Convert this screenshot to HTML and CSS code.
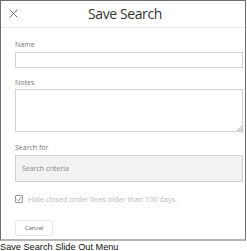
FILE: index.html
```html
<!DOCTYPE html>
<html>
<head>
<meta charset="utf-8">
<link rel="stylesheet" href="styles.css">
</head>
<body>
<div class="panel">
  <div class="header">
    <svg class="close" width="9" height="9" viewBox="0 0 9 9"><path d="M0.5 0.5L8.5 8.5M8.5 0.5L0.5 8.5" stroke="#666" stroke-width="0.9" fill="none"/></svg>
    <div class="title">Save Search</div>
  </div>
  <div class="body">
    <div class="label l-name">Name</div>
    <div class="input"></div>
    <div class="label l-notes">Notes</div>
    <div class="textarea">
      <svg class="grip" width="5" height="5" viewBox="0 0 5 5"><path d="M5 0L0 5M5 2L2 5M5 4L4 5" stroke="#aaa" stroke-width="0.8"/></svg>
    </div>
    <div class="label l-search">Search for</div>
    <div class="criteria">Search criteria</div>
    <div class="check-row">
      <span class="checkbox"><svg width="8" height="8" viewBox="0 0 8 8"><path d="M1.8 4.2L3.4 5.8L6.4 2" stroke="#888" stroke-width="0.9" fill="none"/></svg></span>
      <span class="check-text">Hide closed order lines older than 100 days.</span>
    </div>
    <div class="btn">Cancel</div>
  </div>
</div>
<div class="caption">Save Search Slide Out Menu</div>
</body>
</html>
```
FILE: styles.css
```css
html, body { margin: 0; padding: 0; background: #fff; }
body { font-family: "Open Sans", sans-serif; }
.panel {
  width: 246px;
  height: 241px;
  box-sizing: border-box;
  border: 1px solid #6e6e6e;
  border-bottom: 2px solid #b5b5b5;
  background: #fff;
  position: relative;
}
.header {
  height: 26px;
  border-bottom: 1px solid #ebebeb;
  display: flex;
  align-items: center;
  justify-content: center;
  position: relative;
}
.close { position: absolute; left: 8px; top: 8px; }
.title { font-size: 14px; letter-spacing: -0.4px; color: #333; line-height: 20px; margin-left: 4px; }
.body { padding: 0 2px 0 14px; }
.label { font-size: 7px; color: #777; line-height: 10px; }
.l-name { margin-top: 12px; margin-bottom: 2px; }
.input { height: 16px; box-sizing: border-box; border: 1px solid #d2d2d2; }
.l-notes { margin-top: 10px; margin-bottom: 1px; }
.textarea { height: 43px; box-sizing: border-box; border: 1px solid #d2d2d2; position: relative; }
.grip { position: absolute; right: 0; bottom: 0; }
.l-search { margin-top: 11px; margin-bottom: 2px; }
.criteria {
  height: 27px; box-sizing: border-box; border: 1px solid #d2d2d2; background: #f2f2f2;
  font-size: 7px; color: #888; padding-left: 6px; display: flex; align-items: center;
}
.check-row { display: flex; align-items: center; margin-top: 12px; height: 10px; }
.checkbox { width: 8px; height: 8px; border: 1px solid #999; border-radius: 1px; box-sizing: border-box; display: flex; }
.checkbox svg { margin: -1px; }
.check-text { font-size: 7.3px; color: #bbb; margin-left: 5px; }
.btn {
  margin-top: 16px; width: 38px; height: 16px; box-sizing: border-box; border: 1px solid #e6e6e6; border-radius: 2px;
  font-size: 6px; color: #555; display: flex; align-items: center; justify-content: center;
}
.caption { font-family: "Liberation Sans", Arial, sans-serif; font-size: 9.2px; color: #111; line-height: 10px; margin-top: 1px; }
```
